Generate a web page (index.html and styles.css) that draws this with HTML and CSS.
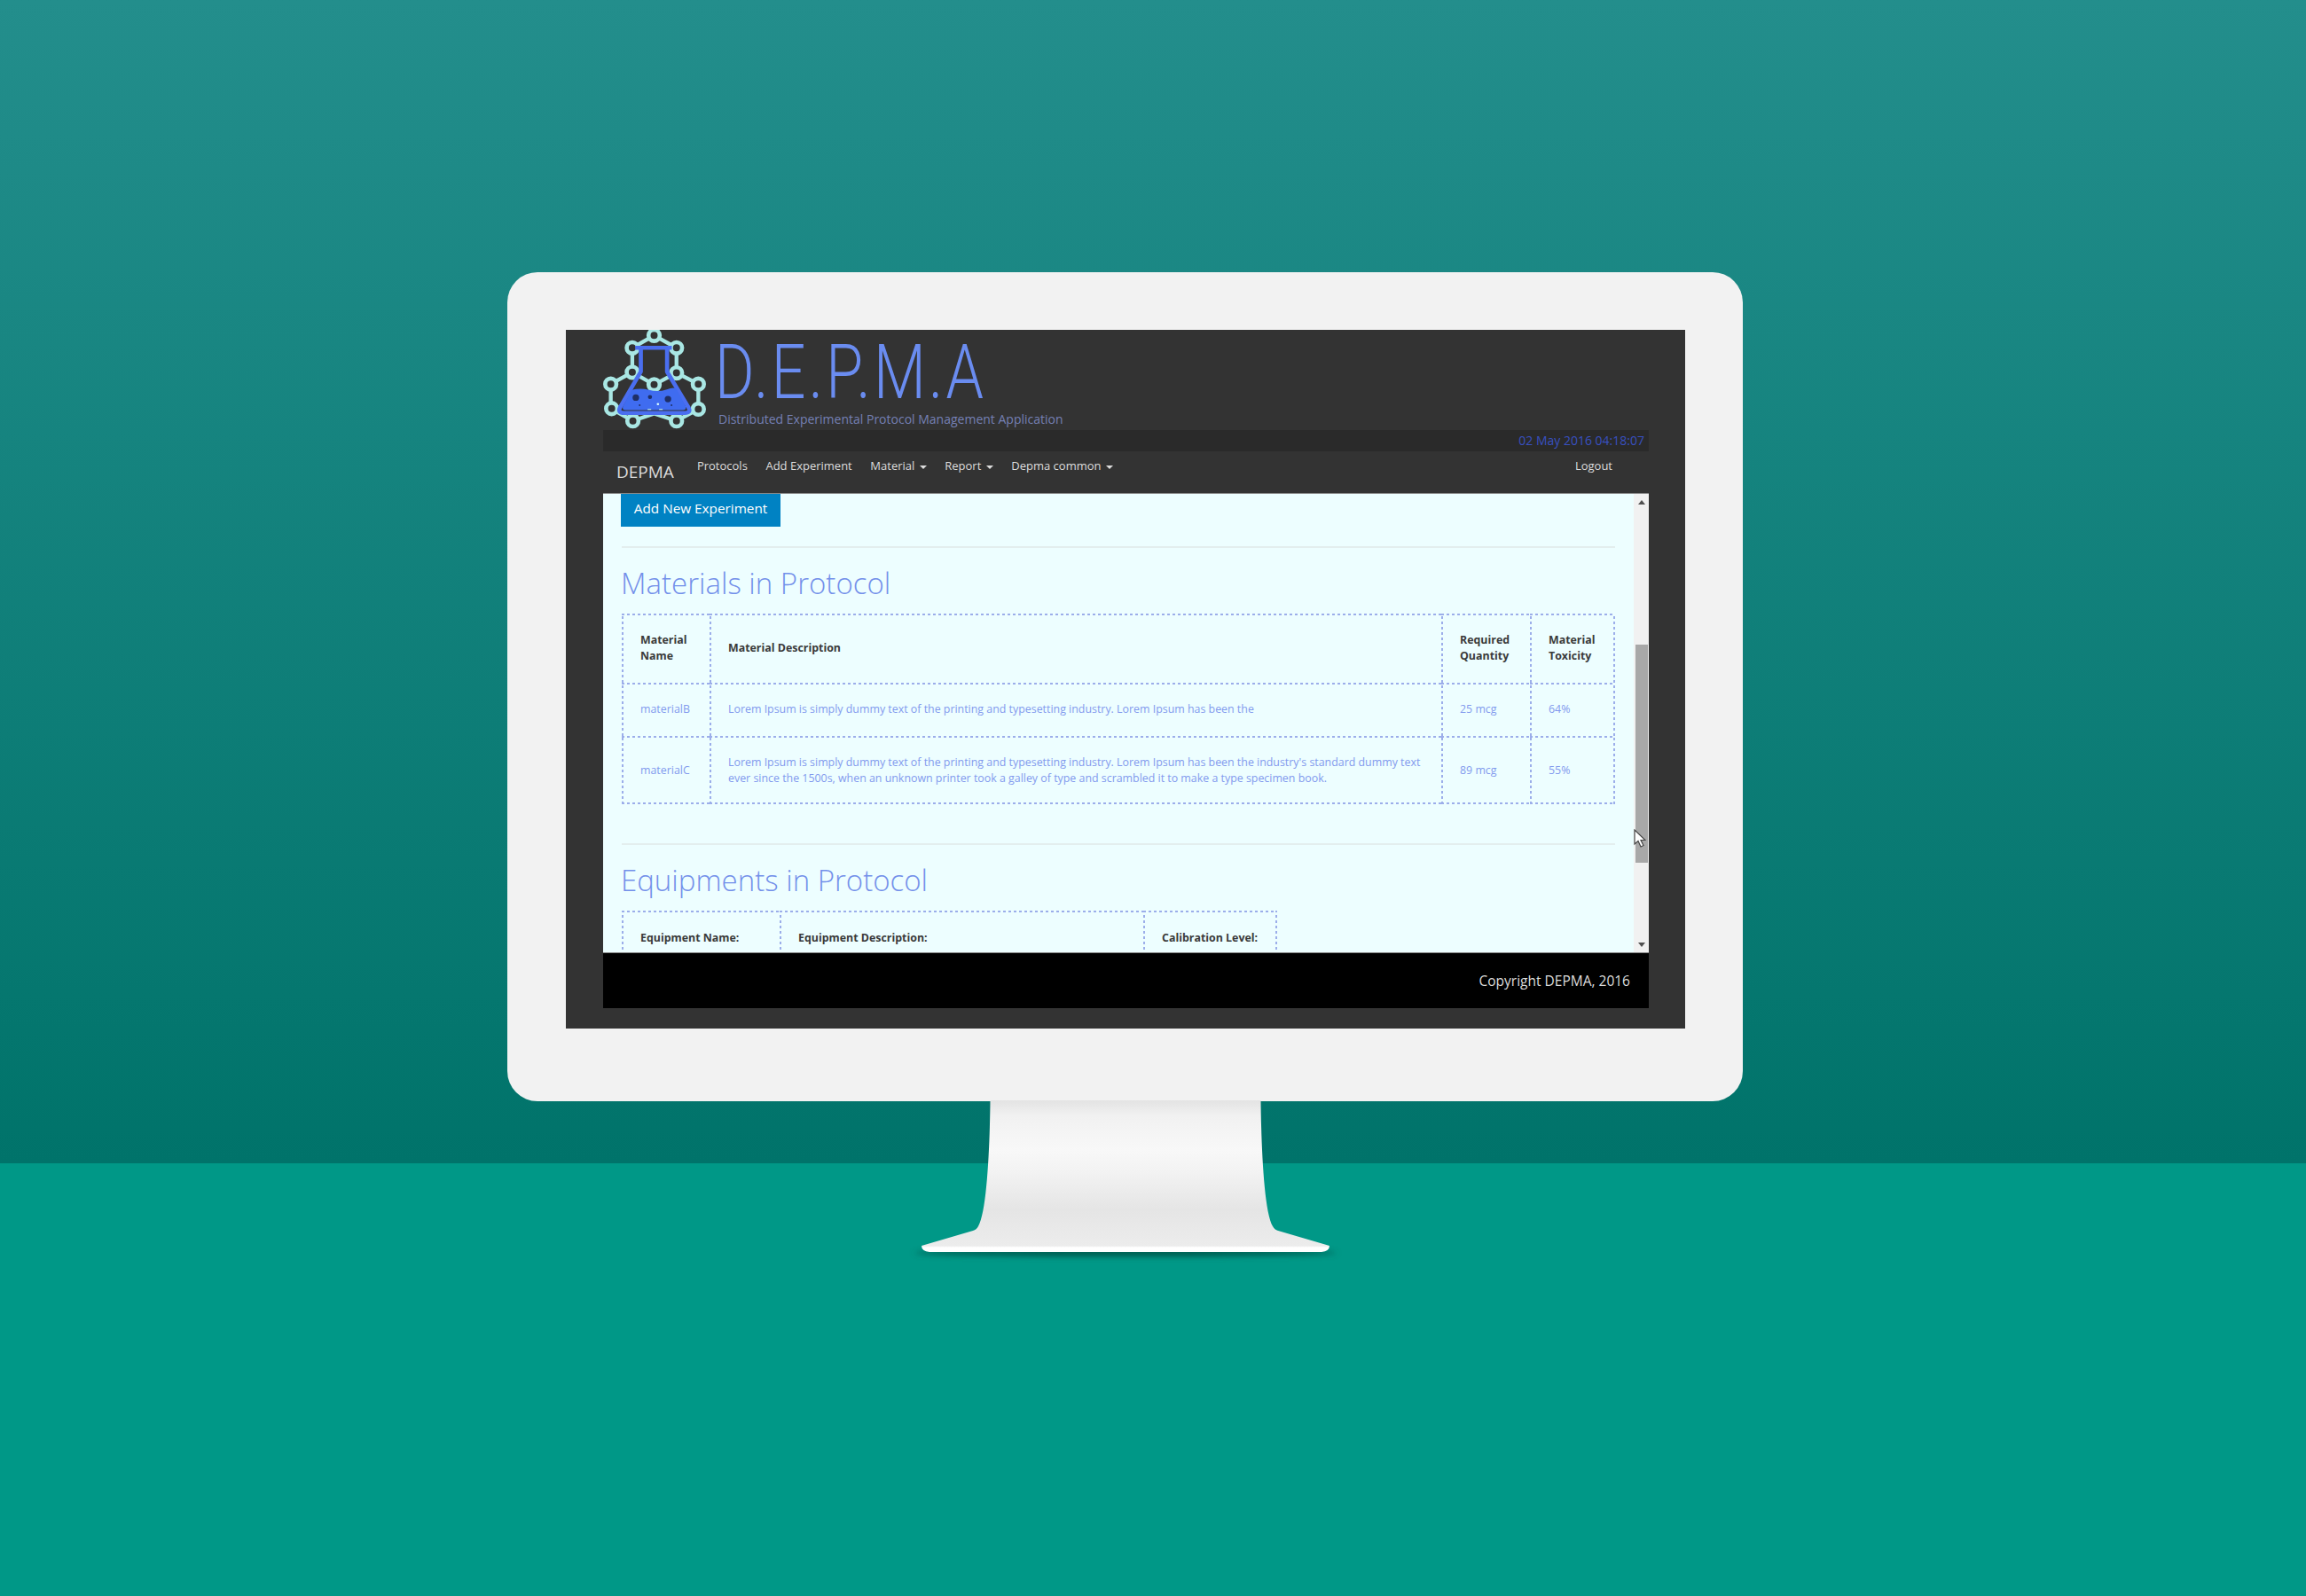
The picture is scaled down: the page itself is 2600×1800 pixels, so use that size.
FILE: index.html
```html
<!DOCTYPE html>
<html lang="en">

<head>
    <meta charset="UTF-8">
    <title>DEPMA on a desktop monitor</title>
    <link rel="stylesheet" href="styles.css">
</head>

<body>
    <div class="monitor">
        <div class="bezel">
            <div class="screen">
                <header class="brand">
                    <svg class="logo" viewBox="50 36 370 340">
                        <g class="bonds">
                            <path d="M232 55L158 97V180L232 222L308 182V97L232 55"/>
                            <path d="M158 180L85 220V303L160 345L232 320L308 345L382 305V220L308 182"/>
                        </g>
                        <g class="atoms">
                            <circle cx="232" cy="55" r="19"/>
                            <circle cx="158" cy="97" r="19"/>
                            <circle cx="308" cy="97" r="19"/>
                            <circle cx="158" cy="180" r="19"/>
                            <circle cx="308" cy="182" r="19"/>
                            <circle cx="232" cy="222" r="19"/>
                            <circle cx="85" cy="220" r="19"/>
                            <circle cx="382" cy="220" r="19"/>
                            <circle cx="88" cy="303" r="19"/>
                            <circle cx="382" cy="305" r="19"/>
                            <circle cx="160" cy="345" r="19"/>
                            <circle cx="308" cy="345" r="19"/>
                        </g>
                        <path class="flask" d="M168 97H292M187 97V178L116 300Q108 318 130 318H336Q358 318 349 300L276 178V97"/>
                        <path class="liquid" d="M156 240Q185 232 215 240T275 238T310 240L339 296Q342 308 330 308H135Q123 308 126 296Z"/>
                        <circle class="bubble" cx="170" cy="266" r="11"/>
                        <circle class="bubble" cx="218" cy="264" r="7"/>
                        <circle class="bubble" cx="279" cy="271" r="11"/>
                        <circle class="bubble" cx="183" cy="292" r="3"/>
                        <circle class="bubble" cx="291" cy="292" r="3"/>
                        <circle class="spark" cx="245" cy="288" r="4"/>
                        <path class="spark-line" d="M210 306H222M249 306H261"/>
                    </svg>
                    <div class="brand-text">
                        <div class="brand-title">D.E.P.M.A</div>
                        <div class="brand-sub">Distributed Experimental Protocol Management Application</div>
                    </div>
                </header>

                <div class="datebar">02 May 2016 04:18:07</div>

                <nav class="navbar">
                    <a class="nav-brand">DEPMA</a>
                    <a class="nav-link">Protocols</a>
                    <a class="nav-link">Add Experiment</a>
                    <a class="nav-link">Material <i class="caret"></i></a>
                    <a class="nav-link">Report <i class="caret"></i></a>
                    <a class="nav-link">Depma common <i class="caret"></i></a>
                    <a class="nav-link nav-right">Logout</a>
                </nav>

                <div class="viewport">
                    <main class="content">
                        <button class="btn-add">Add New Experiment</button>
                        <hr class="rule rule-first">

                        <h2>Materials in Protocol</h2>
                        <table class="grid grid-materials">
                            <colgroup>
                                <col class="col-a">
                                <col class="col-b">
                                <col class="col-c">
                                <col class="col-d">
                            </colgroup>
                            <tr class="row-head">
                                <th>Material Name</th>
                                <th>Material Description</th>
                                <th>Required Quantity</th>
                                <th>Material Toxicity</th>
                            </tr>
                            <tr class="row-one">
                                <td>materialB</td>
                                <td>Lorem Ipsum is simply dummy text of the printing and typesetting industry. Lorem Ipsum has been the</td>
                                <td>25 mcg</td>
                                <td>64%</td>
                            </tr>
                            <tr class="row-two">
                                <td>materialC</td>
                                <td>Lorem Ipsum is simply dummy text of the printing and typesetting industry. Lorem Ipsum has been the industry's standard dummy text ever since the 1500s, when an unknown printer took a galley of type and scrambled it to make a type specimen book.</td>
                                <td>89 mcg</td>
                                <td>55%</td>
                            </tr>
                        </table>

                        <hr class="rule rule-second">

                        <h2>Equipments in Protocol</h2>
                        <table class="grid grid-equipment">
                            <colgroup>
                                <col class="col-e">
                                <col class="col-f">
                                <col class="col-g">
                            </colgroup>
                            <tr class="row-short">
                                <th>Equipment Name:</th>
                                <th>Equipment Description:</th>
                                <th>Calibration Level:</th>
                            </tr>
                        </table>
                    </main>

                    <div class="scrollbar">
                        <span class="arrow arrow-up"></span>
                        <div class="thumb"></div>
                        <span class="arrow arrow-down"></span>
                    </div>

                    <svg class="cursor" viewBox="0 0 14 21">
                        <path d="M1 1V17L5 13.5L8 20L11 18.5L8 12.5H13Z"/>
                    </svg>
                </div>

                <footer class="footer">Copyright DEPMA, 2016</footer>
            </div>
        </div>

        <svg class="stand" viewBox="-20 0 500 190">
            <defs>
                <linearGradient id="standFill" x1="0" y1="0" x2="0" y2="1">
                    <stop offset="0" stop-color="#e3e3e3"/>
                    <stop offset="0.1" stop-color="#f1f1f1"/>
                    <stop offset="0.33" stop-color="#f8f8f8"/>
                    <stop offset="0.46" stop-color="#f3f3f3"/>
                    <stop offset="0.72" stop-color="#e5e5e5"/>
                    <stop offset="0.96" stop-color="#ececec"/>
                    <stop offset="0.97" stop-color="#ffffff"/>
                    <stop offset="1" stop-color="#ffffff"/>
                </linearGradient>
                <filter id="standBlur" x="-10%" y="-200%" width="120%" height="500%">
                    <feGaussianBlur stdDeviation="3"/>
                </filter>
            </defs>
            <ellipse cx="230" cy="172" rx="238" ry="4" fill="#00564c" filter="url(#standBlur)"/>
            <path fill="url(#standFill)" d="M77.5 0C77 50 74 125 64 142Q62 146 58 147L0 164Q0 170 9 171H451Q460 170 460 164L402 147Q398 146 396 142C386 125 383 50 382.5 0Z"/>
        </svg>
    </div>
</body>

</html>
```

FILE: styles.css
```css
body {
    margin: 0;
    height: 1800px;
    overflow: hidden;
    font-family: "Open Sans", sans-serif;
    background: linear-gradient(#238e8c 0, #00736a 1312px, #009887 1312px, #009887 100%);
}

.monitor {
    width: 1393px;
    margin-left: 572px;
    padding-top: 307px;
    display: flex;
    flex-direction: column;
    align-items: center;
}

.bezel {
    width: 100%;
    box-sizing: border-box;
    padding: 65px 65px 82px 66px;
    background-color: #f2f2f2;
    border-radius: 34px;
}

.screen {
    height: 788px;
    box-sizing: border-box;
    padding: 0 41px 0 42px;
    background-color: #333;
    filter: blur(0.5px);
    display: flex;
    flex-direction: column;
}

/* logo and title */
.brand {
    height: 113px;
    flex: none;
    display: flex;
}

.logo {
    width: 123px;
    height: 113px;
    margin-left: -3px;
    flex: none;
}

.bonds path {
    fill: none;
    stroke: #a9e7e4;
    stroke-width: 13;
}

.atoms circle {
    fill: #333;
    stroke: #a9e7e4;
    stroke-width: 14;
}

.flask {
    fill: none;
    stroke: #4a6ef0;
    stroke-width: 14;
    stroke-linejoin: round;
}

.liquid {
    fill: #3f6cf0;
}

.bubble {
    fill: #1f2f66;
}

.spark {
    fill: #dff;
}

.spark-line {
    stroke: #cfe;
    stroke-width: 3;
}

.brand-text {
    margin-left: 6px;
    display: flex;
    flex-direction: column;
}

.brand-title {
    margin-top: 5px;
    font-family: Roboto, sans-serif;
    font-weight: 300;
    font-size: 85px;
    line-height: 86px;
    letter-spacing: 4px;
    color: #6a8cf0;
    transform: scaleX(0.8);
    transform-origin: left;
}

.brand-sub {
    margin-left: 4px;
    font-size: 14px;
    line-height: 20px;
    color: #7580b5;
    white-space: nowrap;
}

/* date strip */
.datebar {
    height: 24px;
    flex: none;
    padding-right: 5px;
    background-color: #2a2a2a;
    color: #3850c0;
    font-size: 14px;
    line-height: 24px;
    text-align: right;
}

/* menu */
.navbar {
    height: 47px;
    flex: none;
    display: flex;
    color: #ddd;
    font-size: 13px;
}

.nav-brand {
    margin: 11px 26px 0 15px;
    font-size: 19px;
    line-height: 24px;
}

.nav-link {
    margin-right: 20.6px;
    line-height: 33px;
}

.nav-right {
    margin-left: auto;
    margin-right: 41px;
}

.caret {
    display: inline-block;
    margin-left: 2px;
    vertical-align: middle;
    border-top: 4px solid #ddd;
    border-left: 4px solid transparent;
    border-right: 4px solid transparent;
}

/* scrolling part */
.viewport {
    position: relative;
    height: 517px;
    flex: none;
    display: flex;
    background-color: #edfeff;
    border-top: 1px solid #888;
    border-bottom: 1px solid #888;
    overflow: hidden;
}

.content {
    flex: 1;
    padding: 0 21px 0 21px;
}

.btn-add {
    display: block;
    width: 180px;
    height: 37px;
    margin-left: -1px;
    padding: 0 0 5px;
    border: none;
    background-color: #0082c3;
    color: #fff;
    font-family: inherit;
    font-size: 15.3px;
}

.rule {
    margin: 0;
    border: none;
    border-top: 2px solid #e3eeee;
}

.rule-first {
    margin-top: 22px;
}

.rule-second {
    margin-top: 44px;
}

h2 {
    margin: 15px 0 0 -1px;
    font-weight: 300;
    font-size: 33px;
    line-height: 50px;
    color: #7390ea;
}

/* dotted lines are background stripes: the period in the reference is wider than border: dotted gives */
.grid {
    --dash-x: repeating-linear-gradient(90deg, #9caeea 0 3px, transparent 3px 6px);
    --dash-y: repeating-linear-gradient(0deg, #9caeea 0 3px, transparent 3px 6px);
    margin-top: 9px;
    table-layout: fixed;
    border-collapse: collapse;
    font-size: 12.4px;
    line-height: 17.6px;
}

.grid th, .grid td {
    padding: 0 8px 0 21px;
    text-align: left;
    background-image: var(--dash-x), var(--dash-y);
    background-size: 100% 2px, 2px 100%;
    background-position: left top, left top;
    background-repeat: no-repeat;
}

.grid th:last-child, .grid td:last-child {
    background-image: var(--dash-x), var(--dash-y), var(--dash-y);
    background-size: 100% 2px, 2px 100%, 2px 100%;
    background-position: left top, left top, right top;
    background-repeat: no-repeat;
}

.grid tr:last-child td {
    background-image: var(--dash-x), var(--dash-y), var(--dash-x);
    background-size: 100% 2px, 2px 100%, 100% 2px;
    background-position: left top, left top, left bottom;
    background-repeat: no-repeat;
}

.grid tr:last-child td:last-child {
    background-image: var(--dash-x), var(--dash-y), var(--dash-y), var(--dash-x);
    background-size: 100% 2px, 2px 100%, 2px 100%, 100% 2px;
    background-position: left top, left top, right top, left bottom;
    background-repeat: no-repeat;
}

.grid th {
    color: #3a3a3a;
    font-weight: 700;
}

.grid td {
    color: #829aee;
}

.grid-materials {
    width: 1120px;
}

.grid-equipment {
    width: 739px;
}

.col-a { width: 99px; }
.col-b { width: 825px; }
.col-c { width: 100px; }
.col-d { width: 96px; }
.col-e { width: 178px; }
.col-f { width: 410px; }
.col-g { width: 151px; }

.row-head { height: 78px; }
.row-one { height: 60px; }
.row-two { height: 77px; }
.row-short { height: 62px; }

.scrollbar {
    width: 17px;
    flex: none;
    position: relative;
    background-color: #f1f1f1;
}

.thumb {
    position: absolute;
    top: 170px;
    left: 2px;
    width: 14px;
    height: 246px;
    background-color: #a8a8a8;
}

.arrow {
    position: absolute;
    left: 5px;
    border-left: 4px solid transparent;
    border-right: 4px solid transparent;
}

.arrow-up {
    top: 7px;
    border-bottom: 5px solid #505050;
}

.arrow-down {
    bottom: 6px;
    border-top: 5px solid #505050;
}

.cursor {
    position: absolute;
    top: 378px;
    right: 3px;
    width: 14px;
    height: 21px;
}

.cursor path {
    fill: #fff;
    stroke: #444;
    stroke-width: 1.2;
}

.footer {
    height: 62px;
    flex: none;
    box-sizing: border-box;
    padding-right: 21px;
    background-color: #000;
    color: #ddd;
    font-size: 15.5px;
    line-height: 62px;
    text-align: right;
}

.stand {
    width: 500px;
    height: 190px;
    flex: none;
    margin-top: -1px;
}
```
